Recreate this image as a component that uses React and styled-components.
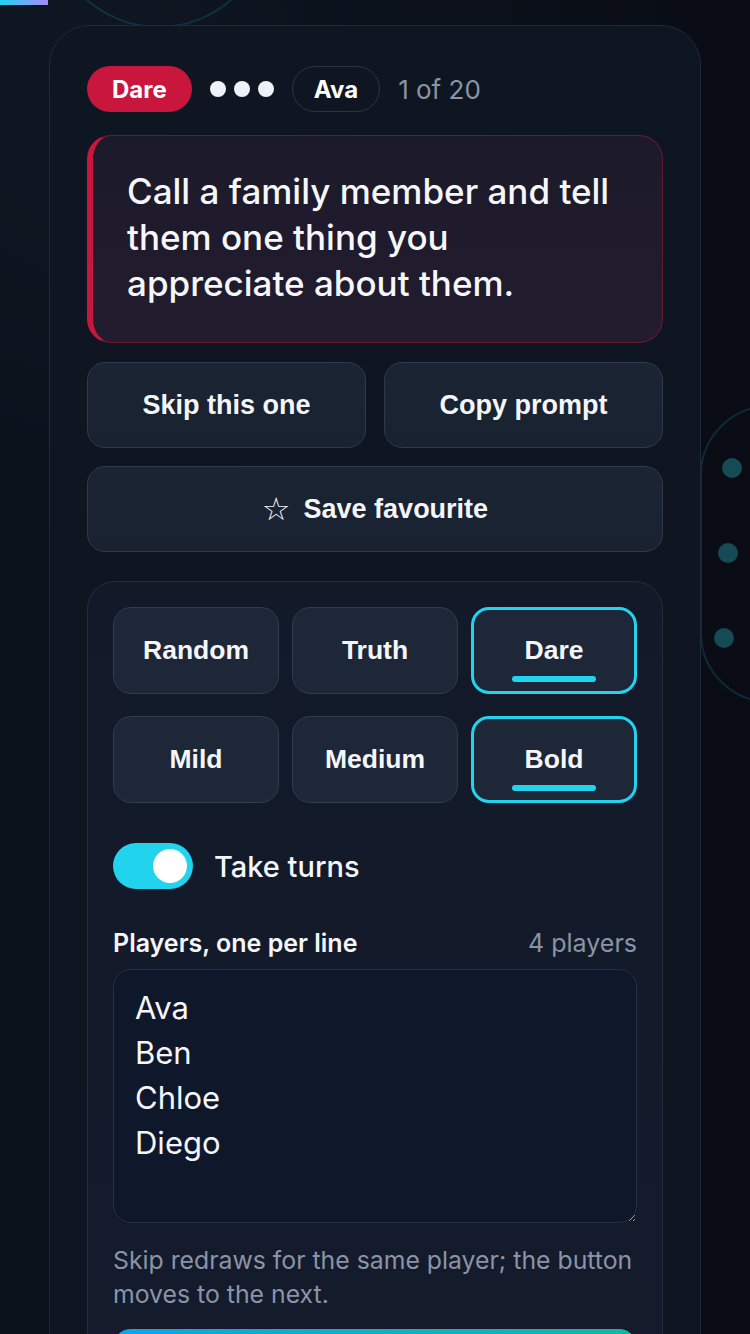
import React from "react";
import styled, { createGlobalStyle, css } from "styled-components";

const Global = createGlobalStyle`
  html, body { margin: 0; padding: 0; background: #0a0e17; }
  * { box-sizing: border-box; }
  body { font-family: "Inter", "Noto Sans", sans-serif; color: #f4f6fa; }
`;

const Page = styled.div`
  position: relative;
  min-height: 1334px;
  overflow: hidden;
  padding-top: 25px;
  background: radial-gradient(ellipse 70% 50% at 10% 5%, #0e1722 0%, rgba(14,23,34,0) 70%),
    linear-gradient(90deg, #0b111b 0%, #0b101a 60%, #090c14 100%);
`;

const Progress = styled.div`
  position: absolute;
  left: 0;
  top: 0;
  width: 48px;
  height: 5px;
  background: linear-gradient(90deg, #22d3ee, #a78bfa);
  z-index: 3;
`;

const Ring = styled.div`
  position: absolute;
  border: 2px solid rgba(32, 150, 160, 0.22);
  left: ${(p) => p.$x}px;
  top: ${(p) => p.$y}px;
  width: ${(p) => p.$w}px;
  height: ${(p) => p.$h}px;
  border-radius: ${(p) => p.$r};
`;

const Dot = styled.div`
  position: absolute;
  width: 20px;
  height: 20px;
  border-radius: 50%;
  background: #164a55;
  left: ${(p) => p.$x - 10}px;
  top: ${(p) => p.$y - 10}px;
`;

const Card = styled.div`
  position: relative;
  z-index: 1;
  margin: 0 49px;
  border: 1.5px solid #1e2a3a;
  border-radius: 40px;
  padding: 40px 37px 0;
  background: linear-gradient(180deg, rgba(14, 22, 33, 0.93) 0%, rgba(15, 22, 35, 0.93) 100%);
  min-height: 1320px;
`;

const Header = styled.div`
  display: flex;
  align-items: center;
  gap: 18px;
  height: 46px;
`;

const Chip = styled.span`
  display: inline-flex;
  align-items: center;
  justify-content: center;
  height: 46px;
  border-radius: 23px;
  font-family: "Inter", sans-serif;
  font-weight: 700;
  font-size: 24px;
  color: #fff;
  ${(p) =>
    p.$variant === "dare"
      ? css`
          background: #c8163d;
          padding: 0 25px;
        `
      : css`
          background: transparent;
          border: 1.5px solid #2a3444;
          padding: 0 21px;
        `}
`;

const Dots = styled.span`
  display: inline-flex;
  gap: 8px;
  align-items: center;
`;

const WhiteDot = styled.span`
  width: 16px;
  height: 16px;
  border-radius: 50%;
  background: #eef2f8;
`;

const Counter = styled.span`
  font-size: 26px;
  color: #8a94a6;
  font-weight: 400;
`;

const Prompt = styled.div`
  margin-top: 23px;
  border-radius: 24px;
  border: 1px solid rgba(200, 22, 61, 0.45);
  border-left: 6px solid #c8163d;
  background: linear-gradient(180deg, #1c1a2a 0%, #221c2e 100%);
  padding: 32px 30px 36px 34px;
`;

const PromptText = styled.p`
  margin: 0;
  font-family: "Inter", sans-serif;
  font-weight: 500;
  font-size: 35px;
  line-height: 46px;
  color: #f6f7fb;
  max-width: 500px;
`;

const ButtonRow = styled.div`
  display: grid;
  grid-template-columns: 1fr 1fr;
  gap: 18px;
  margin-top: 19px;
`;

const ActionButton = styled.button`
  height: 86px;
  width: 100%;
  border-radius: 18px;
  border: 1.5px solid #2e3a4d;
  background: linear-gradient(180deg, #1b2433 0%, #192231 100%);
  color: #f4f6fa;
  font-family: "Liberation Sans", Arial, sans-serif;
  font-weight: 700;
  font-size: 27px;
  display: flex;
  align-items: center;
  justify-content: center;
  gap: 13px;
  margin-top: ${(p) => p.$mt || 0}px;
`;

const Star = styled.span`
  font-family: "DejaVu Sans", sans-serif;
  font-weight: 400;
  font-size: 32px;
  line-height: 1;
`;

const Panel = styled.div`
  margin-top: 29px;
  border-radius: 28px;
  border: 1.5px solid #222d3f;
  background: linear-gradient(180deg, #121a29 0%, #141b2c 100%);
  padding: 25px 25px 0;
  min-height: 760px;
`;

const SegGrid = styled.div`
  display: grid;
  grid-template-columns: repeat(3, 1fr);
  column-gap: 13px;
  row-gap: 22px;
`;

const Seg = styled.button`
  position: relative;
  height: 87px;
  border-radius: 18px;
  border: 1.5px solid #303c50;
  background: #1e2738;
  color: #f4f6fa;
  font-family: "Liberation Sans", Arial, sans-serif;
  font-weight: 700;
  font-size: 26.5px;
  ${(p) =>
    p.$active &&
    css`
      border: 3px solid #22d3ee;
      &::after {
        content: "";
        position: absolute;
        left: 50%;
        bottom: 9px;
        width: 84px;
        height: 6px;
        margin-left: -42px;
        border-radius: 3px;
        background: #22d3ee;
      }
    `}
`;

const ToggleRow = styled.div`
  display: flex;
  align-items: center;
  gap: 21px;
  margin-top: 40px;
`;

const Toggle = styled.div`
  width: 80px;
  height: 46px;
  border-radius: 23px;
  background: #22d3ee;
  display: flex;
  align-items: center;
  justify-content: flex-end;
  padding: 0 6px;
`;

const Knob = styled.div`
  width: 34px;
  height: 34px;
  border-radius: 50%;
  background: #fff;
`;

const ToggleLabel = styled.span`
  font-size: 29px;
  font-weight: 500;
  color: #f4f6fa;
`;

const LabelRow = styled.div`
  display: flex;
  justify-content: space-between;
  align-items: center;
  margin-top: 39px;
  line-height: 30px;
`;

const FieldLabel = styled.span`
  font-size: 25px;
  font-weight: 600;
  color: #f4f6fa;
`;

const FieldCount = styled.span`
  font-size: 25px;
  color: #8a94a6;
`;

const Area = styled.textarea`
  display: block;
  width: 100%;
  height: 254px;
  margin-top: 11px;
  border-radius: 18px;
  border: 1.5px solid #243044;
  background: #0f172a;
  color: #f4f6fa;
  font-family: "Inter", sans-serif;
  font-size: 31px;
  line-height: 45px;
  padding: 15px 21px;
  resize: vertical;
  outline: none;
`;

const Help = styled.p`
  margin: 20px 0 0;
  font-size: 24.8px;
  line-height: 34px;
  color: #8a94a6;
`;

const Primary = styled.button`
  margin-top: 18px;
  width: 100%;
  height: 86px;
  border: none;
  border-radius: 18px;
  background: linear-gradient(90deg, #0ea5e9, #14b8a6);
`;

export default function App() {
  return (
    <>
      <Global />
      <Page>
        <Progress />
        <Ring $x={49} $y={-192} $w={220} $h={220} $r="50%" />
        <Ring $x={700} $y={405} $w={200} $h={298} $r="70px" />
        <Dot $x={732} $y={468} />
        <Dot $x={728} $y={553} />
        <Dot $x={724} $y={638} />
        <Card>
          <Header>
            <Chip $variant="dare">Dare</Chip>
            <Dots>
              <WhiteDot />
              <WhiteDot />
              <WhiteDot />
            </Dots>
            <Chip>Ava</Chip>
            <Counter>1 of 20</Counter>
          </Header>
          <Prompt>
            <PromptText>
              Call a family member and tell them one thing you appreciate about them.
            </PromptText>
          </Prompt>
          <ButtonRow>
            <ActionButton>Skip this one</ActionButton>
            <ActionButton>Copy prompt</ActionButton>
          </ButtonRow>
          <ActionButton $mt={18}>
            <Star>☆</Star>
            Save favourite
          </ActionButton>
          <Panel>
            <SegGrid>
              <Seg>Random</Seg>
              <Seg>Truth</Seg>
              <Seg $active>Dare</Seg>
              <Seg>Mild</Seg>
              <Seg>Medium</Seg>
              <Seg $active>Bold</Seg>
            </SegGrid>
            <ToggleRow>
              <Toggle>
                <Knob />
              </Toggle>
              <ToggleLabel>Take turns</ToggleLabel>
            </ToggleRow>
            <LabelRow>
              <FieldLabel>Players, one per line</FieldLabel>
              <FieldCount>4 players</FieldCount>
            </LabelRow>
            <Area defaultValue={"Ava\nBen\nChloe\nDiego"} spellCheck={false} />
            <Help>Skip redraws for the same player; the button moves to the next.</Help>
            <Primary aria-label="Next" />
          </Panel>
        </Card>
      </Page>
    </>
  );
}
